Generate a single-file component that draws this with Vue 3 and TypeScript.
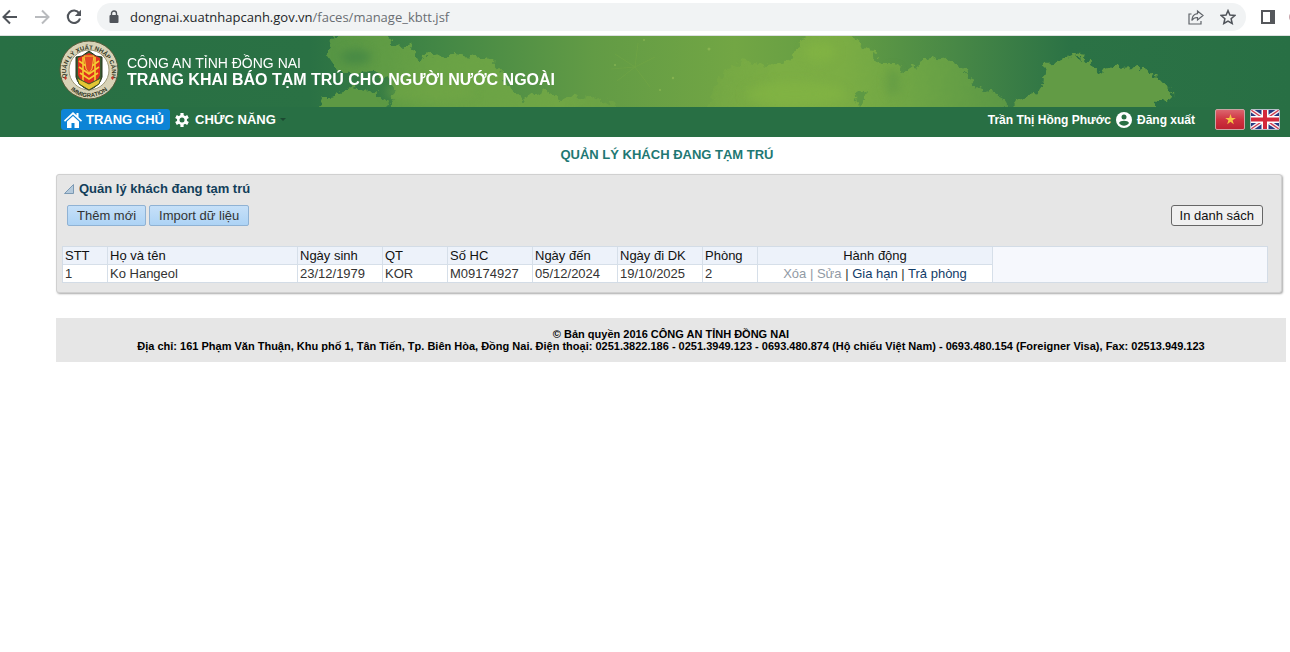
<script setup lang="ts">
interface Guest {
  id: number
  name: string
  birth: string
  nation: string
  passport: string
  arrive: string
  leave: string
  room: string
}

const columns: string[] = ['STT', 'Họ và tên', 'Ngày sinh', 'QT', 'Số HC', 'Ngày đến', 'Ngày đi DK', 'Phòng', 'Hành động']

const guests: Guest[] = [
  {
    id: 1,
    name: 'Ko Hangeol',
    birth: '23/12/1979',
    nation: 'KOR',
    passport: 'M09174927',
    arrive: '05/12/2024',
    leave: '19/10/2025',
    room: '2',
  },
]
</script>

<template>
  <div class="page">
    <div class="toolbar">
      <button class="tool" aria-label="Back">
        <svg width="20" height="20" viewBox="0 0 20 20"><path d="M17 10H4M10 3.500L3.500 10l6.500 6.500" fill="none" stroke="#50545a" stroke-width="2" /></svg>
      </button>
      <button class="tool" aria-label="Forward">
        <svg width="20" height="20" viewBox="0 0 20 20"><path d="M3 10h13M10 3.500L16.500 10 10 16.500" fill="none" stroke="#b9bbbe" stroke-width="2" /></svg>
      </button>
      <button class="tool" aria-label="Reload">
        <svg width="20" height="20" viewBox="0 0 20 20"><path d="M15.200 6.300A6.200 6.200 0 1 0 16 11.500" fill="none" stroke="#50545a" stroke-width="2.100" /><path d="M17 2.800V9h-6.200z" fill="#50545a" /></svg>
      </button>
      <div class="address">
        <svg class="lock" width="10" height="14" viewBox="0 0 10 14"><rect x="0.500" y="5" width="9" height="8" rx="1" fill="#50545a" /><path d="M2.500 6V3.500a2.500 2.500 0 0 1 5 0V6" fill="none" stroke="#50545a" stroke-width="1.400" /></svg>
        <span class="url"><span class="host">dongnai.xuatnhapcanh.gov.vn</span>/faces/manage_kbtt.jsf</span>
        <button class="mini" aria-label="Share">
          <svg width="16" height="16" viewBox="0 0 16 16" fill="none" stroke="#606469" stroke-width="1.200"><path d="M3.500 5H1v10h12v-3M9.500 2l5.500 4.500L9.500 11V8.500C6.500 8.300 5 9.500 3.800 11.500 4 7.500 6 5 9.500 4.600z" /></svg>
        </button>
        <button class="mini" aria-label="Bookmark">
          <svg width="16" height="16" viewBox="0 0 16 16"><path d="M8 1.600l1.900 4.500 4.900.4-3.700 3.200 1.100 4.800L8 12l-4.200 2.500 1.100-4.800L1.200 6.500l4.900-.4z" fill="none" stroke="#50545a" stroke-width="1.500" /></svg>
        </button>
      </div>
      <button class="tool side" aria-label="Side panel">
        <svg width="14" height="14" viewBox="0 0 14 14"><path d="M0 0h14v14H0zM2 2v10h7V2z" fill="#55575b" fill-rule="evenodd" /></svg>
      </button>
      <span class="avatar"></span>
    </div>

    <header class="header">
      <div class="banner">
        <svg class="sky" width="1290" height="71" viewBox="0 0 1290 71" aria-hidden="true">
          <defs>
            <linearGradient id="sky" x1="0" x2="1">
              <stop offset="0" stop-color="#286f44" />
              <stop offset="0.240" stop-color="#2a7144" />
              <stop offset="0.340" stop-color="#438745" />
              <stop offset="0.460" stop-color="#629b45" />
              <stop offset="0.570" stop-color="#72a644" />
              <stop offset="0.660" stop-color="#619b44" />
              <stop offset="0.740" stop-color="#488846" />
              <stop offset="0.830" stop-color="#2b7245" />
              <stop offset="1" stop-color="#286f44" />
            </linearGradient>
            <linearGradient id="fade" x1="327" x2="640" y1="0" y2="0" gradientUnits="userSpaceOnUse">
              <stop offset="0" stop-color="#569544" />
              <stop offset="0.350" stop-color="#69a245" />
              <stop offset="0.750" stop-color="#70a645" />
              <stop offset="1" stop-color="#70a645" stop-opacity="0.400" />
            </linearGradient>
            <linearGradient id="east" x1="700" x2="1018" y1="0" y2="0" gradientUnits="userSpaceOnUse">
              <stop offset="0" stop-color="#7bad44" stop-opacity="0.200" />
              <stop offset="0.250" stop-color="#7cae44" />
              <stop offset="0.450" stop-color="#7bad44" />
              <stop offset="0.700" stop-color="#6ca445" />
              <stop offset="1" stop-color="#599645" />
            </linearGradient>
            <filter id="rough" x="-5%" y="-20%" width="110%" height="140%" color-interpolation-filters="sRGB">
              <feTurbulence type="fractalNoise" baseFrequency="0.140" numOctaves="3" seed="4" result="n" />
              <feDisplacementMap in="SourceGraphic" in2="n" scale="13" xChannelSelector="R" yChannelSelector="G" />
              <feGaussianBlur stdDeviation="0.700" />
            </filter>
            <filter id="soft" x="-40%" y="-60%" width="180%" height="220%" color-interpolation-filters="sRGB"><feGaussianBlur stdDeviation="5" /></filter>
          </defs>
          <rect width="1290" height="71" fill="url(#sky)" />
          <g filter="url(#rough)">
            <path d="M327 20L332 7 340-10H385L391 8 410 11 420 24 430 17 445 22 452 18 472 20 490 24 503 38 510 54 525 63 545 55 560 63 590 60 615 68 630 90H385L392 66 395 55 388 42 370 35 345 38 335 32z" fill="url(#fade)" />
            <path d="M316 90L322 61 340 58 350 51 362 53 375 57 386 64 398 90z" fill="#5d9944" />
            <path d="M700 90L715 50 728 32 745 24 765 30 793 23 800 5 815-10H845L862 10 875 17 880 27 895 27 905 37 920 25 938 20 955 27 968 38 976 52 1000 58 1018 90z" fill="url(#east)" />
            <path d="M1000 90L1018 64 1036 58 1043 49 1045 36 1042 28 1055 27 1070 20 1086 22 1098 36 1115 31 1135 30 1150 38 1165 46 1173 60 1158 66 1146 90z" fill="#629b45" />
          </g>
          <g filter="url(#soft)">
            <ellipse cx="356" cy="21" rx="15" ry="7" fill="#3f8345" opacity="0.700" />
            <ellipse cx="893" cy="46" rx="6" ry="14" fill="#5f9944" opacity="0.700" />
            <ellipse cx="795" cy="58" rx="50" ry="12" fill="#84b543" opacity="0.600" />
            <ellipse cx="820" cy="16" rx="16" ry="10" fill="#84b543" opacity="0.600" />
            <ellipse cx="430" cy="56" rx="45" ry="10" fill="#74a845" opacity="0.500" />
          </g>
          <path d="M858 71l-3-14 5-3 8 3-5 8z" fill="#579545" opacity="0.800" filter="url(#rough)" />
          <g stroke="#88b448" stroke-width="1" opacity="0.200">
            <path d="M635 31L615 18M635 31l-18 14M635 31l3-24M635 31l15 20M635 31l20-10M635 31l-24 2" />
          </g>
          <g fill="#a0c45c" opacity="0.500">
            <circle cx="709" cy="13" r="1.500" /><circle cx="673" cy="42" r="1.200" /><circle cx="660" cy="54" r="1" /><circle cx="615" cy="29" r="1" /><circle cx="644" cy="4" r="1" />
          </g>
        </svg>
        <svg class="logo" width="60" height="60" viewBox="0 0 60 60" role="img" aria-label="Immigration">
          <defs>
            <path id="arc" d="M9.500 43A23 23 0 1 1 50.500 43" />
            <path id="arcLow" d="M6.500 43.500A27 27 0 0 0 53.500 43.500" />
          </defs>
          <circle cx="30" cy="30" r="29" fill="#d8d2b6" stroke="#575b3a" stroke-width="1" />
          <circle cx="30" cy="30" r="20" fill="#fff" stroke="#9d9878" stroke-width="1" />
          <text class="seal"><textPath href="#arc" startOffset="50%" text-anchor="middle">QUẢN LÝ XUẤT NHẬP CẢNH</textPath></text>
          <text class="seal"><textPath href="#arcLow" startOffset="50%" text-anchor="middle">IMMIGRATION</textPath></text>
          <path d="M5 38l1.500 2 1.500-2-1.500-2zM52 38l1.500 2 1.500-2-1.500-2z" fill="#c43a2c" />
          <path d="M17 17l6-1 7-5 7 5 6 1v20q-2 9-13 13-11-4-13-13z" fill="#3d5b32" stroke="#24351f" />
          <path d="M19 18l11-5 11 5v17q-2 6-11 10-9-4-11-10z" fill="#e0301f" />
          <path d="M24 17v24M36 17v24M20 21l10 7 10-7M20 27l10 7 10-7M21 33l9 6 9-6" stroke="#f4cd32" stroke-width="1.600" fill="none" />
          <path d="M25 16h10l-2 13-3 4-3-4z" fill="#e34a25" stroke="#f4cd32" />
          <path d="M18 38l12 6 12-6-2 6-10 6-10-6z" fill="#e3c634" stroke="#435427" />
        </svg>
        <div class="titles">
          <div class="agency">CÔNG AN TỈNH ĐỒNG NAI</div>
          <h1>TRANG KHAI BÁO TẠM TRÚ CHO NGƯỜI NƯỚC NGOÀI</h1>
        </div>
      </div>
      <nav class="nav">
        <a class="home" href="#">
          <svg width="18" height="16" viewBox="0 0 18 16"><path d="M9 0l3.500 3.300V1h2v4.200L18 8.500l-1 1.200L9 2.400 1 9.700 0 8.500z" fill="#fff" /><path d="M9 4l6 5.500V16h-4.500v-5h-3v5H3V9.500z" fill="#fff" /></svg>
          TRANG CHỦ
        </a>
        <a class="functions" href="#">
          <svg width="14" height="14" viewBox="0 0 14 14"><g stroke="#fff" stroke-width="3.200"><path d="M7 0v14M1 3.500l12 7M1 10.500l12-7" /></g><circle cx="7" cy="7" r="5" fill="#fff" /><circle cx="7" cy="7" r="2.500" fill="#286f44" /></svg>
          CHỨC NĂNG
          <svg class="caret" width="6" height="3" viewBox="0 0 6 3"><path d="M0 0h6L3 3z" fill="#1b4931" /></svg>
        </a>
        <div class="account">
          <span>Trần Thị Hồng Phước</span>
          <svg width="16" height="16" viewBox="0 0 16 16"><circle cx="8" cy="8" r="8" fill="#fff" /><circle cx="8" cy="5" r="2.500" fill="#286f44" /><path d="M3 11c1-3 9-3 10 0-2.500 3.500-7.500 3.500-10 0z" fill="#286f44" /></svg>
          <a href="#">Đăng xuất</a>
        </div>
        <button class="flag" aria-label="Tiếng Việt">
          <svg width="30" height="21" viewBox="0 0 30 21"><defs><linearGradient id="red" x2="0" y2="1"><stop offset="0" stop-color="#dc6870" /><stop offset="0.500" stop-color="#cf3341" /><stop offset="1" stop-color="#bd2030" /></linearGradient></defs><rect x="0.500" y="0.500" width="29" height="20" rx="1.500" fill="url(#red)" stroke="#c9a5a4" /><path d="M15.500 5l1.300 3.900h4l-3.200 2.400 1.200 3.900-3.300-2.400-3.300 2.400 1.200-3.900-3.200-2.400h4z" fill="#f6c544" /></svg>
        </button>
        <button class="flag" aria-label="English">
          <svg width="30" height="21" viewBox="0 0 30 21"><rect x="0.500" y="0.500" width="29" height="20" rx="1.500" fill="#263a83" /><path d="M1 1l28 19M29 1L1 20" stroke="#f4f2f5" stroke-width="4" /><path d="M1 1l28 19M29 1L1 20" stroke="#d03a4d" stroke-width="1.300" /><path d="M15 1v19M1 10.500h28" stroke="#fff" stroke-width="7" /><path d="M15 1v19M1 10.500h28" stroke="#d3283b" stroke-width="4" /><rect x="0.500" y="0.500" width="29" height="20" rx="1.500" fill="none" stroke="#b9bfca" /></svg>
        </button>
      </nav>
    </header>

    <main class="content">
      <h2 class="page-title">QUẢN LÝ KHÁCH ĐANG TẠM TRÚ</h2>
      <section class="panel">
        <h3>
          <svg width="10" height="10" viewBox="0 0 10 10"><path d="M9.500 0.500v9h-9z" fill="#b5cadc" stroke="#7b99b3" /></svg>
          Quản lý khách đang tạm trú
        </h3>
        <div class="actions">
          <button class="blue">Thêm mới</button>
          <button class="blue">Import dữ liệu</button>
          <button class="print">In danh sách</button>
        </div>
        <div class="grid">
          <table>
            <colgroup>
              <col class="w45" /><col class="w190" /><col class="w85" /><col class="w65" /><col class="w85" /><col class="w85" /><col class="w85" /><col class="w55" /><col class="w235" />
            </colgroup>
            <thead>
              <tr><th v-for="c in columns" :key="c" scope="col">{{ c }}</th></tr>
            </thead>
            <tbody>
              <tr v-for="g in guests" :key="g.id">
                <td>{{ g.id }}</td>
                <td>{{ g.name }}</td>
                <td>{{ g.birth }}</td>
                <td>{{ g.nation }}</td>
                <td>{{ g.passport }}</td>
                <td>{{ g.arrive }}</td>
                <td>{{ g.leave }}</td>
                <td>{{ g.room }}</td>
                <td><span class="off">Xóa | Sửa</span> | <a href="#">Gia hạn</a> | <a href="#">Trả phòng</a></td>
              </tr>
            </tbody>
          </table>
        </div>
      </section>
    </main>

    <footer class="footer">
      <div>© Bản quyền 2016 CÔNG AN TỈNH ĐỒNG NAI</div>
      <div>Địa chỉ: 161 Phạm Văn Thuận, Khu phố 1, Tân Tiến, Tp. Biên Hòa, Đồng Nai. Điện thoại: 0251.3822.186 - 0251.3949.123 - 0693.480.874 (Hộ chiếu Việt Nam) - 0693.480.154 (Foreigner Visa), Fax: 02513.949.123</div>
    </footer>
  </div>
</template>

<style>
body {
  margin: 0;
  background: #fff;
}
</style>

<style scoped>
.page {
  font-family: "Liberation Sans", Arial, sans-serif;
  font-size: 13px;
  color: #333;
  overflow: hidden;
}
svg {
  display: block;
  flex: none;
}
button {
  font: inherit;
  margin: 0;
  padding: 0;
  cursor: pointer;
}
a {
  text-decoration: none;
  color: inherit;
}
.toolbar {
  box-sizing: border-box;
  height: 36px;
  display: flex;
  align-items: center;
  gap: 12px;
  padding-bottom: 2px;
  border-bottom: 1px solid #dde1e0;
}
.tool,
.mini,
.flag {
  border: 0;
  background: none;
}
.address {
  flex: 1;
  height: 28px;
  margin-left: 1px;
  display: flex;
  align-items: center;
  border-radius: 14px;
  background: #f1f3f4;
  padding: 0 10px 0 12px;
}
.url {
  flex: 1;
  margin-left: 11px;
  font-family: "Open Sans", sans-serif;
  font-size: 13px;
  color: #6a6e73;
}
.host {
  color: #242629;
}
.mini + .mini {
  margin-left: 16px;
}
.side {
  margin-left: 3px;
}
.avatar {
  width: 12px;
  height: 12px;
  margin: 0 -11px 0 2px;
  border-radius: 50%;
  background: #c9a3aa;
}
.header {
  background: #286f44;
  color: #fff;
}
.banner {
  position: relative;
  height: 71px;
  display: flex;
  padding-left: 59px;
  overflow: hidden;
}
.sky {
  position: absolute;
  top: 0;
  left: 0;
}
.logo {
  position: relative;
  margin-top: 4px;
}
.seal {
  font-size: 6px;
  font-weight: 700;
  fill: #33361f;
}
.titles {
  position: relative;
  margin: 19px 0 0 8px;
}
.agency {
  font-size: 14px;
  line-height: 16px;
}
h1 {
  margin: 0;
  font-size: 16px;
  line-height: 18px;
}
.nav {
  height: 30px;
  display: flex;
  align-items: center;
  box-sizing: border-box;
  padding: 0 10px 5px 61px;
  font-size: 13px;
  font-weight: 700;
}
.home,
.functions {
  height: 21px;
  display: flex;
  align-items: center;
}
.home {
  gap: 4px;
  padding: 0 6px 0 3px;
  border-radius: 3px;
  background: #0d84d6;
}
.functions {
  gap: 6px;
  margin-left: 5px;
}
.caret {
  margin-left: -2px;
}
.account {
  display: flex;
  align-items: center;
  gap: 5px;
  margin-left: auto;
  margin-right: 20px;
  font-size: 12px;
}
.flag + .flag {
  margin-left: 5px;
}
.content {
  padding: 0 8px 0 56px;
}
.page-title {
  margin: 0;
  padding: 9px 4px 11px 0;
  font-size: 13px;
  line-height: 17px;
  text-align: center;
  color: #1e7873;
}
.panel {
  padding: 5px 13px 9px 5px;
  border: 1px solid #d0d0d0;
  border-radius: 3px;
  background: #e6e6e6;
  box-shadow: 1px 1px 2px #aaa;
}
h3 {
  display: flex;
  align-items: center;
  gap: 5px;
  margin: 0 0 8px 2px;
  font-size: 13px;
  line-height: 17px;
  color: #123e5a;
}
.actions {
  display: flex;
  gap: 3px;
  padding: 0 5px 20px;
}
.blue {
  height: 21px;
  padding: 0 9px;
  border: 1px solid #8fb2d4;
  border-radius: 2px;
  background: linear-gradient(#c6e0f8, #add3f5);
  color: #333;
}
.print {
  height: 21px;
  margin-left: auto;
  padding: 0 8px;
  border: 1px solid #666;
  border-radius: 3px;
  background: #f0f0f0;
  color: #111;
}
.grid {
  border: 1px solid #d3dce6;
  background: #f6f8fd;
}
table {
  width: 930px;
  table-layout: fixed;
  border-collapse: separate;
  border-spacing: 0;
}
.w45 { width: 45px; }
.w190 { width: 190px; }
.w85 { width: 85px; }
.w65 { width: 65px; }
.w55 { width: 55px; }
.w235 { width: 235px; }
th,
td {
  height: 17px;
  padding: 0 2px;
  line-height: 17px;
  text-align: left;
  white-space: nowrap;
  border-right: 1px solid #d6dfe9;
}
th {
  font-weight: 400;
  color: #111;
  background: #edf2fa;
  border-bottom: 1px solid #d6dfe9;
}
td {
  background: #fff;
}
th:last-child,
td:last-child {
  text-align: center;
}
.off {
  color: #919aa5;
}
td a {
  color: #123c68;
}
.footer {
  margin: 25px 4px 0 56px;
  padding: 10px 0;
  background: #e6e6e6;
  color: #000;
  font-size: 11px;
  font-weight: 700;
  line-height: 12px;
  text-align: center;
}
</style>
